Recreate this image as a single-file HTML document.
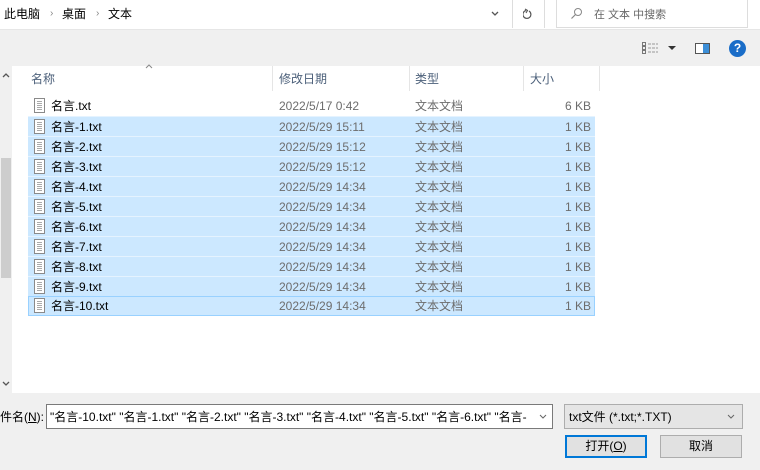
<!DOCTYPE html>
<html><head><meta charset="utf-8"><style>
*{margin:0;padding:0;box-sizing:border-box}
body{width:760px;height:470px;overflow:hidden;background:#f0f0f0;font-family:"Liberation Sans","Noto Sans CJK SC",sans-serif;font-size:12px;line-height:14px;color:#000;position:relative}
.a{position:absolute}
.row{position:absolute;left:28px;width:567px;height:20px}
.sel{background:#cce8ff;border-top:1px solid #e5f3ff}
.row .n{position:absolute;left:23px;top:3px}
.row .d{position:absolute;left:251px;top:3px;color:#6d6d6d}
.row .t{position:absolute;left:387px;top:3px;color:#6d6d6d}
.row .s{position:absolute;right:4px;top:3px;color:#6d6d6d}
.ic{position:absolute;left:6px;top:2px;width:11px;height:15px;border:1px solid #8a8a8a;background:#fff}
.ic:after{content:"";position:absolute;left:2px;top:2px;width:5px;height:9px;background:repeating-linear-gradient(#aaa 0 1px,transparent 1px 2px)}
</style></head><body>
<div class="a" style="left:0;top:0;width:760px;height:30px;background:#fff;border-bottom:1px solid #e6e6e6"></div>
<div class="a" style="left:4px;top:7px">此电脑</div>
<div class="a" style="left:50px;top:7px;color:#888;font-size:10px">›</div>
<div class="a" style="left:62px;top:7px">桌面</div>
<div class="a" style="left:96px;top:7px;color:#888;font-size:10px">›</div>
<div class="a" style="left:108px;top:7px">文本</div>
<svg class="a" style="left:491px;top:11px" width="8" height="6"><path d="M1 1L4 4L7 1" stroke="#555" stroke-width="1.3" fill="none"/></svg>
<div class="a" style="left:512px;top:0;width:1px;height:28px;background:#ddd"></div>
<div class="a" style="left:544px;top:0;width:1px;height:28px;background:#ddd"></div>
<svg class="a" style="left:523px;top:8px" width="11" height="12"><path d="M3 2.5A4 4 0 1 0 6 3" stroke="#555" stroke-width="1.2" fill="none"/><path d="M2 1L4.5 2.5L3 5" stroke="#555" stroke-width="1.1" fill="none"/></svg>
<div class="a" style="left:556px;top:0;width:192px;height:28px;border:1px solid #ddd;border-top:none;background:#fff"></div>
<svg class="a" style="left:570px;top:7px" width="13" height="13"><circle cx="8" cy="5" r="3.5" stroke="#888" fill="none"/><path d="M5.5 7.5L1.5 11.5" stroke="#888" stroke-width="1.2"/></svg>
<div class="a" style="left:594px;top:8px;color:#666;font-size:11px">在 文本 中搜索</div>
<!-- toolbar -->
<svg class="a" style="left:642px;top:42px" width="18" height="13"><g fill="none" stroke="#777"><rect x="0.5" y="0.5" width="3" height="3"/><rect x="0.5" y="4.5" width="3" height="3"/><rect x="0.5" y="8.5" width="3" height="3"/></g><g stroke="#999"><path d="M6 2H16M6 6H16M6 10H16" stroke-dasharray="3 1"/></g></svg>
<div class="a" style="left:668px;top:46px;width:0;height:0;border-left:4px solid transparent;border-right:4px solid transparent;border-top:4px solid #333"></div>
<div class="a" style="left:695px;top:43px;width:15px;height:11px;border:1px solid #555;background:#fff"><div style="position:absolute;right:0;top:0;width:6px;height:9px;background:#3c8fd8"></div></div>
<div class="a" style="left:729px;top:40px;width:17px;height:17px;border-radius:50%;background:#1a6dc8;color:#fff;font-weight:bold;font-size:12px;text-align:center;line-height:17px">?</div>
<!-- list -->
<div class="a" style="left:12px;top:66px;width:748px;height:327px;background:#fff"></div>
<div class="a" style="left:0;top:66px;width:12px;height:327px;background:#f0f0f0"></div>
<div class="a" style="left:1px;top:158px;width:10px;height:120px;background:#cdcdcd"></div>
<svg class="a" style="left:2px;top:72px" width="8" height="6"><path d="M1 5L4 2L7 5" stroke="#555" stroke-width="1.3" fill="none"/></svg>
<svg class="a" style="left:2px;top:381px" width="8" height="6"><path d="M1 1L4 4L7 1" stroke="#555" stroke-width="1.3" fill="none"/></svg>
<svg class="a" style="left:145px;top:64px" width="8" height="5"><path d="M1 4L4 1L7 4" stroke="#888" fill="none"/></svg>
<div class="a" style="left:31px;top:72px;color:#4c607a">名称</div>
<div class="a" style="left:279px;top:72px;color:#4c607a">修改日期</div>
<div class="a" style="left:415px;top:72px;color:#4c607a">类型</div>
<div class="a" style="left:530px;top:72px;color:#4c607a">大小</div>
<div class="a" style="left:272px;top:66px;width:1px;height:25px;background:#e5e5e5"></div>
<div class="a" style="left:409px;top:66px;width:1px;height:25px;background:#e5e5e5"></div>
<div class="a" style="left:523px;top:66px;width:1px;height:25px;background:#e5e5e5"></div>
<div class="a" style="left:599px;top:66px;width:1px;height:25px;background:#e5e5e5"></div>

<div class="row" style="top:96px"><div class="ic"></div><span class="n">名言.txt</span><span class="d">2022/5/17 0:42</span><span class="t">文本文档</span><span class="s">6 KB</span></div>
<div class="row sel" style="top:116px"><div class="ic"></div><span class="n">名言-1.txt</span><span class="d">2022/5/29 15:11</span><span class="t">文本文档</span><span class="s">1 KB</span></div>
<div class="row sel" style="top:136px"><div class="ic"></div><span class="n">名言-2.txt</span><span class="d">2022/5/29 15:12</span><span class="t">文本文档</span><span class="s">1 KB</span></div>
<div class="row sel" style="top:156px"><div class="ic"></div><span class="n">名言-3.txt</span><span class="d">2022/5/29 15:12</span><span class="t">文本文档</span><span class="s">1 KB</span></div>
<div class="row sel" style="top:176px"><div class="ic"></div><span class="n">名言-4.txt</span><span class="d">2022/5/29 14:34</span><span class="t">文本文档</span><span class="s">1 KB</span></div>
<div class="row sel" style="top:196px"><div class="ic"></div><span class="n">名言-5.txt</span><span class="d">2022/5/29 14:34</span><span class="t">文本文档</span><span class="s">1 KB</span></div>
<div class="row sel" style="top:216px"><div class="ic"></div><span class="n">名言-6.txt</span><span class="d">2022/5/29 14:34</span><span class="t">文本文档</span><span class="s">1 KB</span></div>
<div class="row sel" style="top:236px"><div class="ic"></div><span class="n">名言-7.txt</span><span class="d">2022/5/29 14:34</span><span class="t">文本文档</span><span class="s">1 KB</span></div>
<div class="row sel" style="top:256px"><div class="ic"></div><span class="n">名言-8.txt</span><span class="d">2022/5/29 14:34</span><span class="t">文本文档</span><span class="s">1 KB</span></div>
<div class="row sel" style="top:276px"><div class="ic"></div><span class="n">名言-9.txt</span><span class="d">2022/5/29 14:34</span><span class="t">文本文档</span><span class="s">1 KB</span></div>
<div class="row sel" style="top:296px;border:1px solid #99d1ff"><div class="ic" style="left:5px;top:1px"></div><span class="n" style="left:22px;top:2px">名言-10.txt</span><span class="d" style="left:250px;top:2px">2022/5/29 14:34</span><span class="t" style="left:386px;top:2px">文本文档</span><span class="s" style="right:3px;top:2px">1 KB</span></div>

<!-- bottom -->
<div class="a" style="left:0;top:410px">件名(<u>N</u>):</div>
<div class="a" style="left:46px;top:404px;width:507px;height:25px;background:#fff;border:1px solid #7a7a7a;overflow:hidden;white-space:nowrap;padding:5px 0 0 3px">"名言-10.txt" "名言-1.txt" "名言-2.txt" "名言-3.txt" "名言-4.txt" "名言-5.txt" "名言-6.txt" "名言-</div>
<div class="a" style="left:534px;top:406px;width:18px;height:21px;background:#fff"></div>
<svg class="a" style="left:539px;top:414px" width="8" height="6"><path d="M1 1L4 4L7 1" stroke="#666" fill="none"/></svg>
<div class="a" style="left:564px;top:404px;width:179px;height:25px;background:#e5e5e5;border:1px solid #adadad;padding:5px 0 0 4px">txt文件 (*.txt;*.TXT)</div>
<svg class="a" style="left:727px;top:414px" width="8" height="6"><path d="M1 1L4 4L7 1" stroke="#666" fill="none"/></svg>
<div class="a" style="left:565px;top:435px;width:82px;height:23px;background:#e1e1e1;border:1px solid #0078d7;box-shadow:inset 0 0 0 1px #0078d7;text-align:center;line-height:21px">打开(<u>O</u>)</div>
<div class="a" style="left:660px;top:435px;width:82px;height:23px;background:#e1e1e1;border:1px solid #adadad;text-align:center;line-height:21px">取消</div>
</body></html>
